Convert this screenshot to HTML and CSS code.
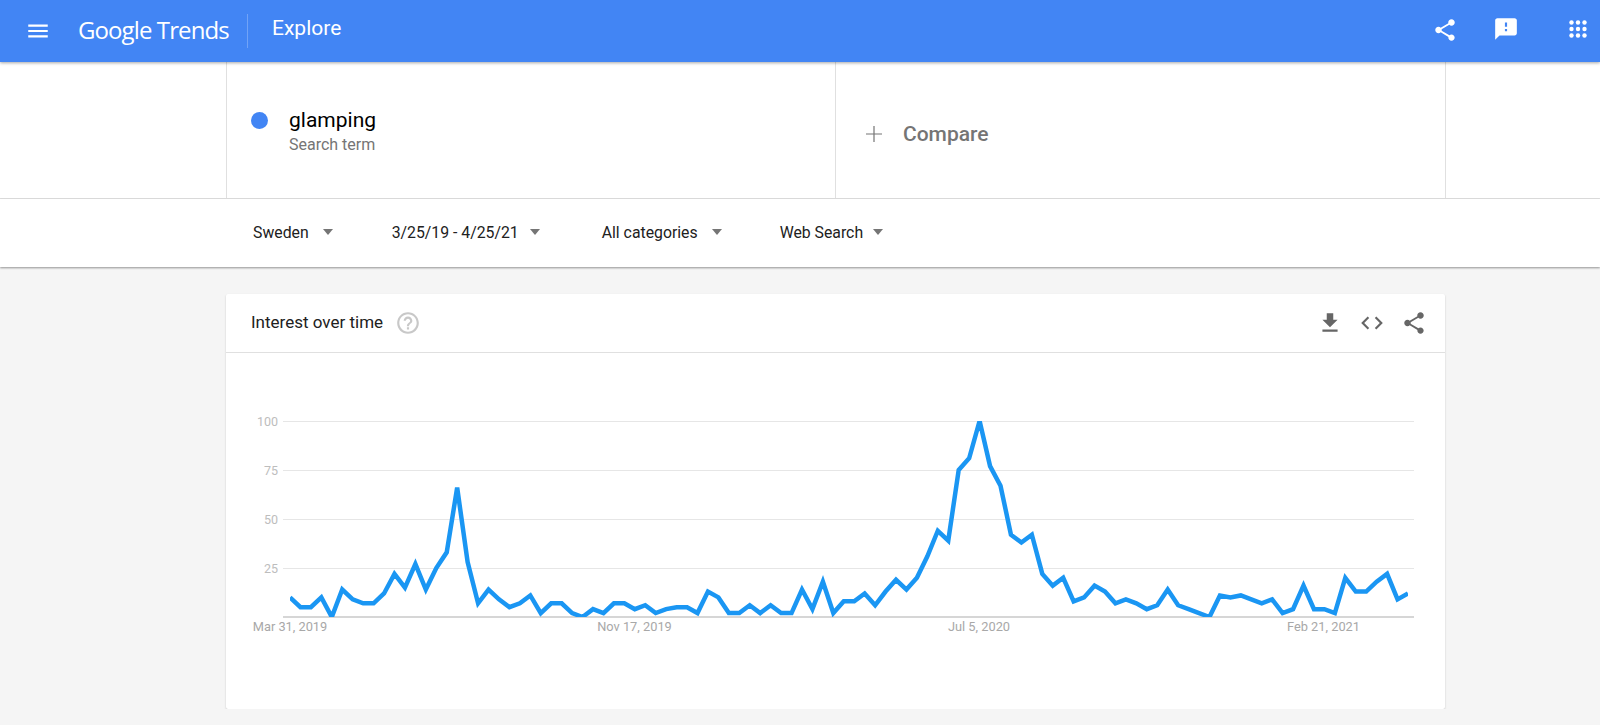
FILE: index.html
```html
<!DOCTYPE html>
<html>
<head>
  <meta charset="utf-8">
  <meta name="viewport" content="width=device-width, initial-scale=1">
  <title>glamping - Explore - Google Trends</title>
  <link rel="stylesheet" href="styles.css">
</head>
<body>
  <div class="header">
    <svg class="menu-icon" viewBox="0 0 24 24"><path d="M3 18h18v-2H3v2zm0-5h18v-2H3v2zm0-7v2h18V6H3z"/></svg>
    <div class="logo">Google Trends</div>
    <div class="page-title">Explore</div>
    <div class="header-icons">
      <svg class="share-icon" viewBox="0 0 24 24"><path d="M18 16.08c-.76 0-1.44.3-1.96.77L8.91 12.7c.05-.23.09-.46.09-.7s-.04-.47-.09-.7l7.05-4.11c.54.5 1.25.81 2.04.81 1.66 0 3-1.34 3-3s-1.34-3-3-3-3 1.34-3 3c0 .24.04.47.09.7L8.04 9.81C7.5 9.31 6.79 9 6 9c-1.66 0-3 1.34-3 3s1.34 3 3 3c.79 0 1.5-.31 2.04-.81l7.12 4.16c-.05.21-.08.43-.08.65 0 1.61 1.31 2.92 2.92 2.92 1.61 0 2.92-1.31 2.92-2.92s-1.31-2.92-2.92-2.92z"/></svg>
      <svg class="feedback-icon" viewBox="0 0 24 24"><path d="M20 2H4c-1.1 0-1.99.9-1.99 2L2 22l4-4h14c1.1 0 2-.9 2-2V4c0-1.1-.9-2-2-2zm-7 12h-2v-2h2v2zm0-4h-2V6h2v4z"/></svg>
      <svg class="apps-icon" viewBox="0 0 18 18">
        <circle cx="2.5" cy="2.5" r="2.2"/><circle cx="9" cy="2.5" r="2.2"/><circle cx="15.5" cy="2.5" r="2.2"/>
        <circle cx="2.5" cy="9" r="2.2"/><circle cx="9" cy="9" r="2.2"/><circle cx="15.5" cy="9" r="2.2"/>
        <circle cx="2.5" cy="15.5" r="2.2"/><circle cx="9" cy="15.5" r="2.2"/><circle cx="15.5" cy="15.5" r="2.2"/>
      </svg>
    </div>
  </div>

  <div class="search-row">
    <div class="search-inner">
      <div class="term">
        <span class="term-dot"></span>
        <div>
          <div class="term-name">glamping</div>
          <div class="term-type">Search term</div>
        </div>
      </div>
      <div class="compare">
        <svg class="plus-icon" viewBox="0 0 18 18"><path d="M8.4 1h1.2v7.4H17v1.2H9.6V17H8.4V9.6H1V8.4h7.4z"/></svg>
        <span>Compare</span>
      </div>
    </div>
  </div>

  <div class="filters">
    <div class="filter filter-geo">Sweden<span class="arrow"></span></div>
    <div class="filter filter-date">3/25/19 - 4/25/21<span class="arrow"></span></div>
    <div class="filter filter-cat">All categories<span class="arrow"></span></div>
    <div class="filter filter-prop">Web Search<span class="arrow"></span></div>
  </div>

  <div class="card">
    <div class="card-header">
      <div class="card-title">Interest over time</div>
      <svg class="help-icon" viewBox="0 0 24 24"><path d="M11 18h2v-2h-2v2zm1-16C6.48 2 2 6.48 2 12s4.48 10 10 10 10-4.48 10-10S17.52 2 12 2zm0 18c-4.41 0-8-3.59-8-8s3.59-8 8-8 8 3.59 8 8-3.59 8-8 8zm0-14c-2.21 0-4 1.79-4 4h2c0-1.1.9-2 2-2s2 .9 2 2c0 2-3 1.75-3 5h2c0-2.25 3-2.5 3-5 0-2.21-1.79-4-4-4z"/></svg>
      <div class="card-actions">
        <svg viewBox="0 0 24 24"><path d="M19 9h-4V3H9v6H5l7 7 7-7zM5 18v2h14v-2H5z"/></svg>
        <svg viewBox="0 0 24 24"><path d="M9.4 16.6L4.8 12l4.6-4.6L8 6l-6 6 6 6 1.4-1.4zm5.2 0l4.6-4.6-4.6-4.6L16 6l6 6-6 6-1.4-1.4z"/></svg>
        <svg viewBox="0 0 24 24"><path d="M18 16.08c-.76 0-1.44.3-1.96.77L8.91 12.7c.05-.23.09-.46.09-.7s-.04-.47-.09-.7l7.05-4.11c.54.5 1.25.81 2.04.81 1.66 0 3-1.34 3-3s-1.34-3-3-3-3 1.34-3 3c0 .24.04.47.09.7L8.04 9.81C7.5 9.31 6.79 9 6 9c-1.66 0-3 1.34-3 3s1.34 3 3 3c.79 0 1.5-.31 2.04-.81l7.12 4.16c-.05.21-.08.43-.08.65 0 1.61 1.31 2.92 2.92 2.92 1.61 0 2.92-1.31 2.92-2.92s-1.31-2.92-2.92-2.92z"/></svg>
      </div>
    </div>

    <div class="plot">
      <div class="grid-row"><span class="y-label">100</span></div>
      <div class="grid-row"><span class="y-label">75</span></div>
      <div class="grid-row"><span class="y-label">50</span></div>
      <div class="grid-row"><span class="y-label">25</span></div>
      <div class="baseline"></div>
      <!-- x = week index, y = 100 - interest -->
      <svg class="trend" viewBox="0 0 107 100" preserveAspectRatio="none">
        <polyline points="0,90 1,95 2,95 3,90 4,100 5,86 6,91 7,93 8,93 9,88 10,78 11,85 12,73 13,86 14,75 15,67 16,34 17,72 18,93 19,86 20,91 21,95 22,93 23,89 24,98 25,93 26,93 27,98 28,100 29,96 30,98 31,93 32,93 33,96 34,94 35,98 36,96 37,95 38,95 39,98 40,87 41,90 42,98 43,98 44,94 45,98 46,94 47,98 48,98 49,86 50,96 51,82 52,98 53,92 54,92 55,88 56,94 57,87 58,81 59,86 60,80 61,69 62,56 63,61 64,25 65,19 66,0 67,23 68,33 69,58 70,62 71,58 72,78 73,84 74,80 75,92 76,90 77,84 78,87 79,93 80,91 81,93 82,96 83,94 84,86 85,94 86,96 87,98 88,100 89,89 90,90 91,89 92,91 93,93 94,91 95,98 96,96 97,84 98,96 99,96 100,98 101,80 102,87 103,87 104,82 105,78 106,91 107,88"/>
      </svg>
      <span class="x-label" style="left: 7px">Mar 31, 2019</span>
      <span class="x-label" style="left: 351.5px">Nov 17, 2019</span>
      <span class="x-label" style="left: 696px">Jul 5, 2020</span>
      <span class="x-label" style="left: 1040.5px">Feb 21, 2021</span>
    </div>
  </div>
</body>
</html>
```

FILE: styles.css
```css
body {
  font-family: Roboto, "Liberation Sans", sans-serif;
  margin: 0;
  background: #f5f5f5;
  color: #212121;
}

svg {
  display: block;
  flex: none;
}

.header {
  height: 62px;
  background: #4285f4;
  color: white;
  display: flex;
  align-items: center;
  position: relative;
  box-shadow: 0 1px 3px rgba(0, 0, 0, 0.35);
}

.menu-icon {
  width: 26px;
  height: 26px;
  margin-left: 25px;
  fill: white;
}

.logo {
  margin-left: 27px;
  width: 169px;
  height: 34px;
  line-height: 32px;
  font-family: "Open Sans", sans-serif;
  font-size: 24px;
  letter-spacing: -0.9px;
  border-right: 1px solid rgba(255, 255, 255, 0.25);
}

.page-title {
  margin-left: 24px;
  margin-top: -6px;
  font-size: 21px;
}

.header-icons {
  margin-left: auto;
  display: flex;
  align-items: center;
  padding-right: 13px;
  fill: white;
}

.share-icon,
.feedback-icon {
  width: 26px;
  height: 26px;
}

.share-icon {
  margin-top: -2px;
}

.feedback-icon {
  margin-left: 35px;
  margin-top: -4px;
}

.apps-icon {
  width: 18px;
  height: 18px;
  margin-left: 50px;
  margin-top: -4px;
}

.search-row {
  background: white;
  border-bottom: 1px solid #e0e0e0;
}

.search-inner {
  box-sizing: border-box;
  width: 1220px;
  height: 136px;
  margin-left: 226px;
  display: grid;
  grid-template-columns: 609px 1fr;
  border-left: 1px solid #e0e0e0;
  border-right: 1px solid #e0e0e0;
}

.term {
  display: flex;
  align-items: flex-start;
  padding: 45px 0 0 24px;
  border-right: 1px solid #e0e0e0;
}

.term-dot {
  width: 17px;
  height: 17px;
  margin-top: 5px;
  margin-right: 21px;
  border-radius: 50%;
  background: #4285f4;
}

.term-name {
  font-size: 21px;
  line-height: 26px;
  color: #000;
}

.term-type {
  font-size: 16px;
  line-height: 24px;
  color: #757575;
}

.compare {
  display: flex;
  align-items: center;
  padding-top: 8px;
  padding-left: 29px;
  font-size: 21px;
  font-weight: 500;
  color: #757575;
}

.plus-icon {
  width: 18px;
  height: 18px;
  margin-right: 20px;
  fill: #757575;
}

.filters {
  box-sizing: border-box;
  height: 68px;
  padding-left: 253px;
  padding-bottom: 2px;
  background: white;
  display: flex;
  align-items: center;
  font-size: 15.8px;
  box-shadow: 0 1px 2px rgba(0, 0, 0, 0.4);
}

.filter {
  display: flex;
  align-items: center;
  color: #212121;
}

.arrow {
  width: 0;
  height: 0;
  margin-left: 14px;
  border-left: 5px solid transparent;
  border-right: 5px solid transparent;
  border-top: 6px solid #757575;
}

.filter-date {
  margin-left: 59px;
}

.filter-date .arrow {
  margin-left: 11px;
}

.filter-cat {
  margin-left: 62px;
}

.filter-prop {
  margin-left: 58px;
}

.filter-prop .arrow {
  margin-left: 10px;
}

.card {
  width: 1219px;
  height: 415px;
  margin: 27px 0 0 226px;
  background: white;
  border-radius: 2px;
  box-shadow: 0 1px 2px rgba(0, 0, 0, 0.2);
}

.card-header {
  height: 58px;
  padding-left: 25px;
  padding-right: 18px;
  display: flex;
  align-items: center;
  border-bottom: 1px solid #e0e0e0;
}

.card-title {
  font-size: 17px;
  margin-top: -2px;
  color: #212121;
}

.help-icon {
  width: 26px;
  height: 26px;
  margin-left: 12px;
  fill: #c8c8c8;
}

.card-actions {
  margin-left: auto;
  display: flex;
  gap: 16px;
  fill: #666;
}

.card-actions svg {
  width: 26px;
  height: 26px;
}

.plot {
  position: relative;
  width: 1131px;
  margin: 68px 0 0 57px;
}

.grid-row {
  position: relative;
  height: 48px;
  border-top: 1px solid #e6e6e6;
}

.baseline {
  height: 2px;
  margin-top: -1px;
  background: #d6d6d6;
}

.y-label {
  position: absolute;
  right: 100%;
  top: -8px;
  padding-right: 5px;
  font-size: 12.5px;
  line-height: 16px;
  color: #bdbdbd;
}

.trend {
  position: absolute;
  left: 7px;
  top: 0;
  width: 1118px;
  height: 196px;
  overflow: hidden;
}

.trend polyline {
  fill: none;
  stroke: #1a96f3;
  stroke-width: 4.5px;
  stroke-linejoin: miter;
  vector-effect: non-scaling-stroke;
}

.x-label {
  position: absolute;
  top: 196px;
  transform: translateX(-50%);
  font-size: 12.8px;
  line-height: 20px;
  white-space: nowrap;
  color: #a8a8a8;
}
```
